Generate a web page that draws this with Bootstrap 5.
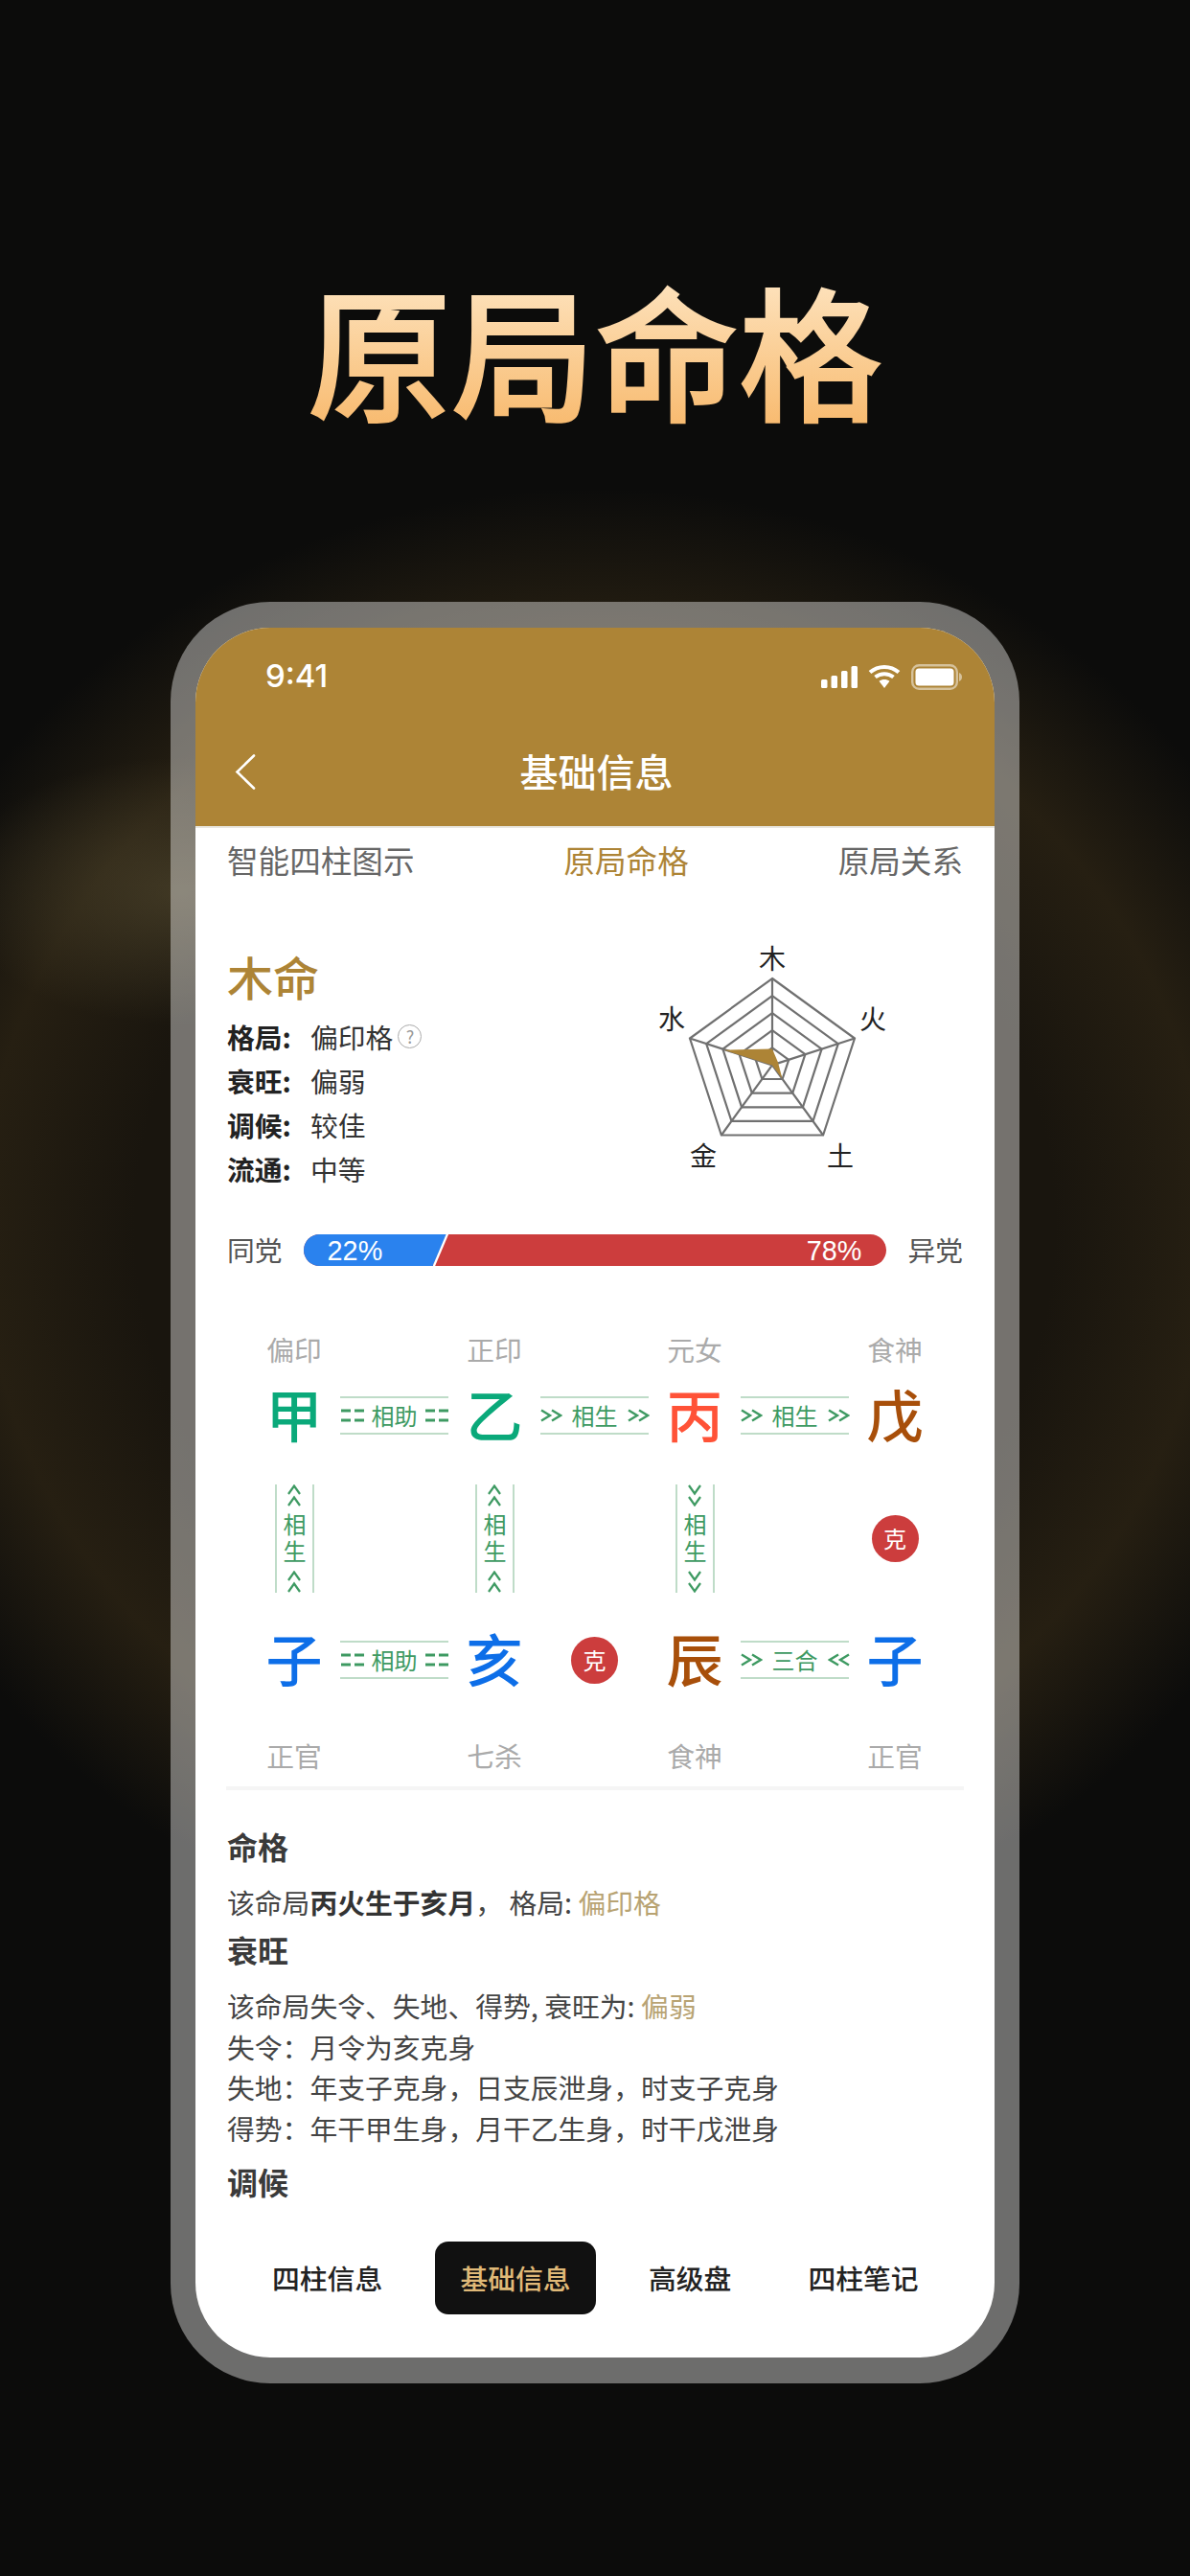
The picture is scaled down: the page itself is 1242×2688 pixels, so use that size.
<!DOCTYPE html>
<html lang="zh">
<head>
<meta charset="utf-8">
<title>原局命格</title>
<link href="https://cdn.jsdelivr.net/npm/bootstrap@5.3.0/dist/css/bootstrap.min.css" rel="stylesheet">
<style>
html,body{margin:0;padding:0;}
body{width:1242px;height:2688px;overflow:hidden;font-family:"Noto Sans CJK SC",sans-serif;color:#333;
 background:
  radial-gradient(ellipse 240px 140px at 190px 930px,rgba(90,80,52,.55),rgba(90,80,52,0) 100%),
  radial-gradient(ellipse 800px 770px at 621px 1280px,#19150e 0%,#19150e 60%,#261f12 80%,#0c0c0b 100%);
 background-color:#0c0c0c;}
.poster-title{margin:0;height:628px;padding-top:264px;font-size:150px;line-height:198px;font-weight:500;text-align:center;
 -webkit-text-stroke:2px transparent;
 background:linear-gradient(180deg,#fde0b8 48%,#f8bb70 70.5%);-webkit-background-clip:text;background-clip:text;color:transparent;}
.phone-shell{width:886px;height:1859px;margin:0 auto;padding:27px 26px;border-radius:104px;background:rgba(255,255,255,.4);}
.phone-screen{width:834px;height:1805px;border-radius:78px;overflow:hidden;background:#fff;}
.top-head{height:209px;background:#ad8436;color:#fff;border-bottom:2px solid #e8e6e0;padding-top:23px;}
.stat-line{height:56px;padding:0 34px 0 73px;display:flex;align-items:center;justify-content:space-between;}
.clock-txt{font-family:Inter,sans-serif;font-size:33px;font-weight:500;}
.nav-line{position:relative;height:128px;}
.nav-back{position:absolute;left:41px;top:53px;}
.nav-name{font-size:40px;font-weight:500;line-height:52px;text-align:center;padding-top:44px;padding-left:3px;}
.sub-tabs{padding:0 33px 2px;height:68px;display:flex;justify-content:space-between;align-items:center;font-size:32.6px;color:#666;line-height:1;}
.sub-on{color:#ad8436;}
.gold-h{font-size:48px;line-height:60px;font-weight:500;color:#ad8436;margin-bottom:10px;}
.summary{height:356px;padding:56px 33px 0 33px;position:relative;}
.info-row{display:flex;align-items:center;height:46.3px;font-size:28.8px;color:#333;}
.info-k{width:87px;font-weight:700;color:#222;}
.q-mark{display:inline-flex;width:25px;height:25px;border:1.5px solid #aaa;border-radius:50%;align-items:center;justify-content:center;color:#999;font-size:18px;margin-left:5px;line-height:1;}
.radar-box{position:absolute;left:0;top:0;pointer-events:none;}
.dang-row{display:flex;align-items:center;padding:0 33px;height:33px;font-size:28.8px;color:#555;line-height:1;}
.dang-bar{flex:1;height:33px;margin:0 22px;border-radius:17px;overflow:hidden;display:flex;font-family:"Liberation Sans",sans-serif;color:#fff;background:#cc3d3d;}
.dang-blue{width:150px;background:#2a82ee;clip-path:polygon(0 0,100% 0,calc(100% - 15px) 100%,0 100%);padding-left:25px;line-height:34px;flex:none;}
.dang-red{flex:1;margin-left:-14px;text-align:right;padding-right:26px;line-height:34px;position:relative;}
.dang-red::before{content:"";position:absolute;left:-1px;top:0;bottom:0;width:17px;background:#fff;clip-path:polygon(14px 0,16.500px 0,2.500px 100%,0 100%);}
.pil-grid{display:grid;grid-template-columns:repeat(4,209px);margin-left:-1.5px;width:836px;}
.pil-lab{text-align:center;font-size:28.8px;line-height:40px;color:#aaa;height:40px;}
.pil-row{display:flex;height:76px;align-items:center;padding-left:55px;}
.pil-ch{width:96px;text-align:center;font-size:59px;font-weight:500;line-height:72px;padding-bottom:4px;flex:none;}
.pil-rel{width:113px;height:40px;flex:none;border-top:2px solid #bfdcc8;border-bottom:2px solid #bfdcc8;color:#3e9a62;font-size:24px;line-height:36px;text-align:center;white-space:nowrap;display:flex;align-items:center;justify-content:center;gap:8px;}
.pil-relw{gap:10px;}
.pil-gap{width:113px;flex:none;display:flex;justify-content:center;}
.c-wood{color:#0aa97a;}.c-fire{color:#ff5237;}.c-earth{color:#a84f0a;}.c-water{color:#0d6ee8;}
.ke-dot{width:49px;height:49px;border-radius:50%;background:#cc3d3d;color:#fff;font-size:24px;display:flex;align-items:center;justify-content:center;line-height:1;}
.pil-mid{display:flex;height:133px;align-items:center;margin-left:-1.5px;width:836px;}
.pil-midcell{width:209px;flex:none;display:flex;justify-content:center;}
.vert-rel{width:41px;height:113px;border-left:2px solid #bfdcc8;border-right:2px solid #bfdcc8;color:#3e9a62;font-size:24px;display:flex;flex-direction:column;align-items:center;justify-content:space-between;}
.vert-word{writing-mode:vertical-rl;text-orientation:upright;letter-spacing:4px;line-height:30px;white-space:nowrap;padding-top:3px;}
.rel-ico{flex:none;display:block;}
.rule-line{height:4px;background:#f5f5f5;margin:12px 32px 0 32px;}
.notes{padding:0 33px;height:471px;}
.note-h{font-size:32px;font-weight:700;color:#3a3a3a;line-height:35px;padding-bottom:5px;box-sizing:content-box;}
.note-p{font-size:28.8px;line-height:42.5px;color:#444;white-space:pre;}
.note-p b{font-weight:700;color:#333;}
.note-g{color:#b8a373;}
.bot-tabs{display:flex;align-items:center;padding:0 0 0 80px;height:76px;font-size:28.8px;font-weight:500;color:#222;white-space:nowrap;}
.bot-on{width:168px;height:76px;background:#111;color:#e0b978;border-radius:14px;display:flex;align-items:center;justify-content:center;}
</style>
</head>
<body>
<svg width="0" height="0" style="position:absolute">
 <defs>
  <symbol id="dbl" viewBox="0 0 24 14"><path d="M0 2H10M14 2H24M0 12H10M14 12H24" stroke="#3e9a62" stroke-width="3" fill="none"/></symbol>
  <symbol id="chevr" viewBox="0 0 23 14"><path d="M1 1.500L10 7L1 12.500M12 1.500L21 7L12 12.500" stroke="#3e9a62" stroke-width="2.400" fill="none"/></symbol>
  <symbol id="chevl" viewBox="0 0 23 14"><path d="M22 1.500L13 7L22 12.500M11 1.500L2 7L11 12.500" stroke="#3e9a62" stroke-width="2.400" fill="none"/></symbol>
  <symbol id="chevu" viewBox="0 0 14 23"><path d="M1 10L7 1.500L13 10M1 22L7 13.500L13 22" stroke="#3e9a62" stroke-width="2.200" fill="none"/></symbol>
  <symbol id="chevd" viewBox="0 0 14 23"><path d="M1 1L7 9.500L13 1M1 13L7 21.500L13 13" stroke="#3e9a62" stroke-width="2.200" fill="none"/></symbol>
 </defs>
</svg>
<h1 class="poster-title">原局命格</h1>
<div class="phone-shell">
 <div class="phone-screen">
  <div class="top-head">
   <div class="stat-line">
    <span class="clock-txt">9:41</span>
    <span class="d-flex align-items-center" style="gap:11px">
     <svg width="38" height="24" viewBox="0 0 38 24"><g fill="#fff"><rect x="0" y="15" width="6.500" height="9" rx="1.500"/><rect x="10.500" y="11" width="6.500" height="13" rx="1.500"/><rect x="21" y="6" width="6.500" height="18" rx="1.500"/><rect x="31.500" y="1" width="6.500" height="23" rx="1.500"/></g></svg>
     <svg width="34" height="26" viewBox="0 0 34 26"><path d="M2 8.500 C10.500 1 23.500 1 32 8.500" fill="none" stroke="#fff" stroke-width="4"/><path d="M7.500 13.500 C13 9 21 9 26.500 13.500" fill="none" stroke="#fff" stroke-width="4"/><path d="M11.500 17.800 C14.800 15.400 19.200 15.400 22.500 17.800 L17 25 Z" fill="#fff"/></svg>
     <svg width="53" height="27" viewBox="0 0 53 27"><rect x="1.200" y="1.200" width="46.600" height="24.600" rx="7" fill="none" stroke="#fff" stroke-opacity=".5" stroke-width="2.400"/><rect x="4.500" y="4.500" width="40" height="18" rx="3.500" fill="#fff"/><path d="M50 9 c2 .6 3 2.400 3 4.500 s-1 3.900-3 4.500z" fill="#fff" fill-opacity=".5"/></svg>
    </span>
   </div>
   <div class="nav-line">
    <svg class="nav-back" width="22" height="37" viewBox="0 0 22 37"><path d="M20 1.500 L2.500 18.500 L20 35.500" fill="none" stroke="#fff" stroke-width="2.600" stroke-linecap="round"/></svg>
    <div class="nav-name">基础信息</div>
   </div>
  </div>
  <div class="sub-tabs"><span>智能四柱图示</span><span class="sub-on">原局命格</span><span>原局关系</span></div>
  <div class="summary">
   <div class="gold-h">木命</div>
   <div class="info-row"><span class="info-k">格局:</span><span>偏印格</span><span class="q-mark">?</span></div>
   <div class="info-row"><span class="info-k">衰旺:</span><span>偏弱</span></div>
   <div class="info-row"><span class="info-k">调候:</span><span>较佳</span></div>
   <div class="info-row"><span class="info-k">流通:</span><span>中等</span></div>
   <svg class="radar-box" viewBox="0 0 834 330" width="834" height="330">
    <g transform="translate(602,179.400)" fill="none" stroke="#707070" stroke-width="2.200">
     <polygon points="0,-90.400 86,-27.900 53.100,73.100 -53.100,73.100 -86,-27.900"/>
     <polygon points="0,-72.300 68.800,-22.300 42.500,58.500 -42.500,58.500 -68.800,-22.300"/>
     <polygon points="0,-54.200 51.600,-16.700 31.900,43.900 -31.900,43.900 -51.600,-16.700"/>
     <polygon points="0,-36.200 34.400,-11.200 21.200,29.200 -21.200,29.200 -34.400,-11.200"/>
     <polygon points="0,-18.100 17.200,-5.600 10.600,14.600 -10.600,14.600 -17.200,-5.600"/>
     <path d="M0,0V-90.400M0,0L86,-27.900M0,0L53.100,73.100M0,0L-53.100,73.100M0,0L-86,-27.900"/>
     <polygon points="0,-17 6,-3 10.500,14.300 0,0 -50.300,-15.700" fill="#ad8436" stroke="none"/>
    </g>
    <g font-size="28" fill="#222" text-anchor="middle" font-family="Noto Sans CJK SC, sans-serif">
     <text x="602" y="79">木</text><text x="497" y="142">水</text><text x="707" y="142">火</text><text x="530" y="285">金</text><text x="673" y="285">土</text>
    </g>
   </svg>
  </div>
  <div class="dang-row"><span>同党</span>
   <div class="dang-bar"><div class="dang-blue">22%</div><div class="dang-red">78%</div></div>
   <span>异党</span></div>
  <div class="pil-grid" style="margin-top:67px"><div class="pil-lab">偏印</div><div class="pil-lab">正印</div><div class="pil-lab">元女</div><div class="pil-lab">食神</div></div>
  <div class="pil-row" style="margin-top:11px">
   <div class="pil-ch c-wood">甲</div>
   <div class="pil-rel"><svg class="rel-ico" width="24" height="14"><use href="#dbl"/></svg><span>相助</span><svg class="rel-ico" width="24" height="14"><use href="#dbl"/></svg></div>
   <div class="pil-ch c-wood">乙</div>
   <div class="pil-rel pil-relw"><svg class="rel-ico" width="23" height="14"><use href="#chevr"/></svg><span>相生</span><svg class="rel-ico" width="23" height="14"><use href="#chevr"/></svg></div>
   <div class="pil-ch c-fire">丙</div>
   <div class="pil-rel pil-relw"><svg class="rel-ico" width="23" height="14"><use href="#chevr"/></svg><span>相生</span><svg class="rel-ico" width="23" height="14"><use href="#chevr"/></svg></div>
   <div class="pil-ch c-earth">戊</div>
  </div>
  <div class="pil-mid" style="margin-top:23.500px">
   <div class="pil-midcell"><div class="vert-rel"><svg class="rel-ico" width="14" height="23"><use href="#chevu"/></svg><span class="vert-word">相生</span><svg class="rel-ico" width="14" height="23"><use href="#chevu"/></svg></div></div>
   <div class="pil-midcell"><div class="vert-rel"><svg class="rel-ico" width="14" height="23"><use href="#chevu"/></svg><span class="vert-word">相生</span><svg class="rel-ico" width="14" height="23"><use href="#chevu"/></svg></div></div>
   <div class="pil-midcell"><div class="vert-rel"><svg class="rel-ico" width="14" height="23"><use href="#chevd"/></svg><span class="vert-word">相生</span><svg class="rel-ico" width="14" height="23"><use href="#chevd"/></svg></div></div>
   <div class="pil-midcell"><div class="ke-dot">克</div></div>
  </div>
  <div class="pil-row" style="margin-top:22.500px">
   <div class="pil-ch c-water">子</div>
   <div class="pil-rel"><svg class="rel-ico" width="24" height="14"><use href="#dbl"/></svg><span>相助</span><svg class="rel-ico" width="24" height="14"><use href="#dbl"/></svg></div>
   <div class="pil-ch c-water">亥</div>
   <div class="pil-gap"><div class="ke-dot">克</div></div>
   <div class="pil-ch c-earth">辰</div>
   <div class="pil-rel pil-relw"><svg class="rel-ico" width="23" height="14"><use href="#chevr"/></svg><span>三合</span><svg class="rel-ico" width="23" height="14"><use href="#chevl"/></svg></div>
   <div class="pil-ch c-water">子</div>
  </div>
  <div class="pil-grid" style="margin-top:42px"><div class="pil-lab">正官</div><div class="pil-lab">七杀</div><div class="pil-lab">食神</div><div class="pil-lab">正官</div></div>
  <div class="rule-line"></div>
  <div class="notes">
   <div class="note-h" style="padding-top:40.600px">命格</div>
   <div class="note-p" style="margin-top:15px">该命局<b>丙火生于亥月</b>， 格局: <span class="note-g">偏印格</span></div>
   <div class="note-h" style="margin-top:11px">衰旺</div>
   <div class="note-p" style="margin-top:15px">该命局失令、失地、得势, 衰旺为: <span class="note-g">偏弱</span></div>
   <div class="note-p">失令：月令为亥克身</div>
   <div class="note-p">失地：年支子克身，日支辰泄身，时支子克身</div>
   <div class="note-p">得势：年干甲生身，月干乙生身，时干戊泄身</div>
   <div class="note-h" style="margin-top:17px">调候</div>
  </div>
  <div class="bot-tabs"><span style="width:112px">四柱信息</span><span class="bot-on" style="margin-left:58px">基础信息</span><span style="margin-left:55px">高级盘</span><span style="margin-left:80px">四柱笔记</span></div>
 </div>
</div>
<script src="https://cdn.jsdelivr.net/npm/bootstrap@5.3.0/dist/js/bootstrap.bundle.min.js"></script>
</body>
</html>
